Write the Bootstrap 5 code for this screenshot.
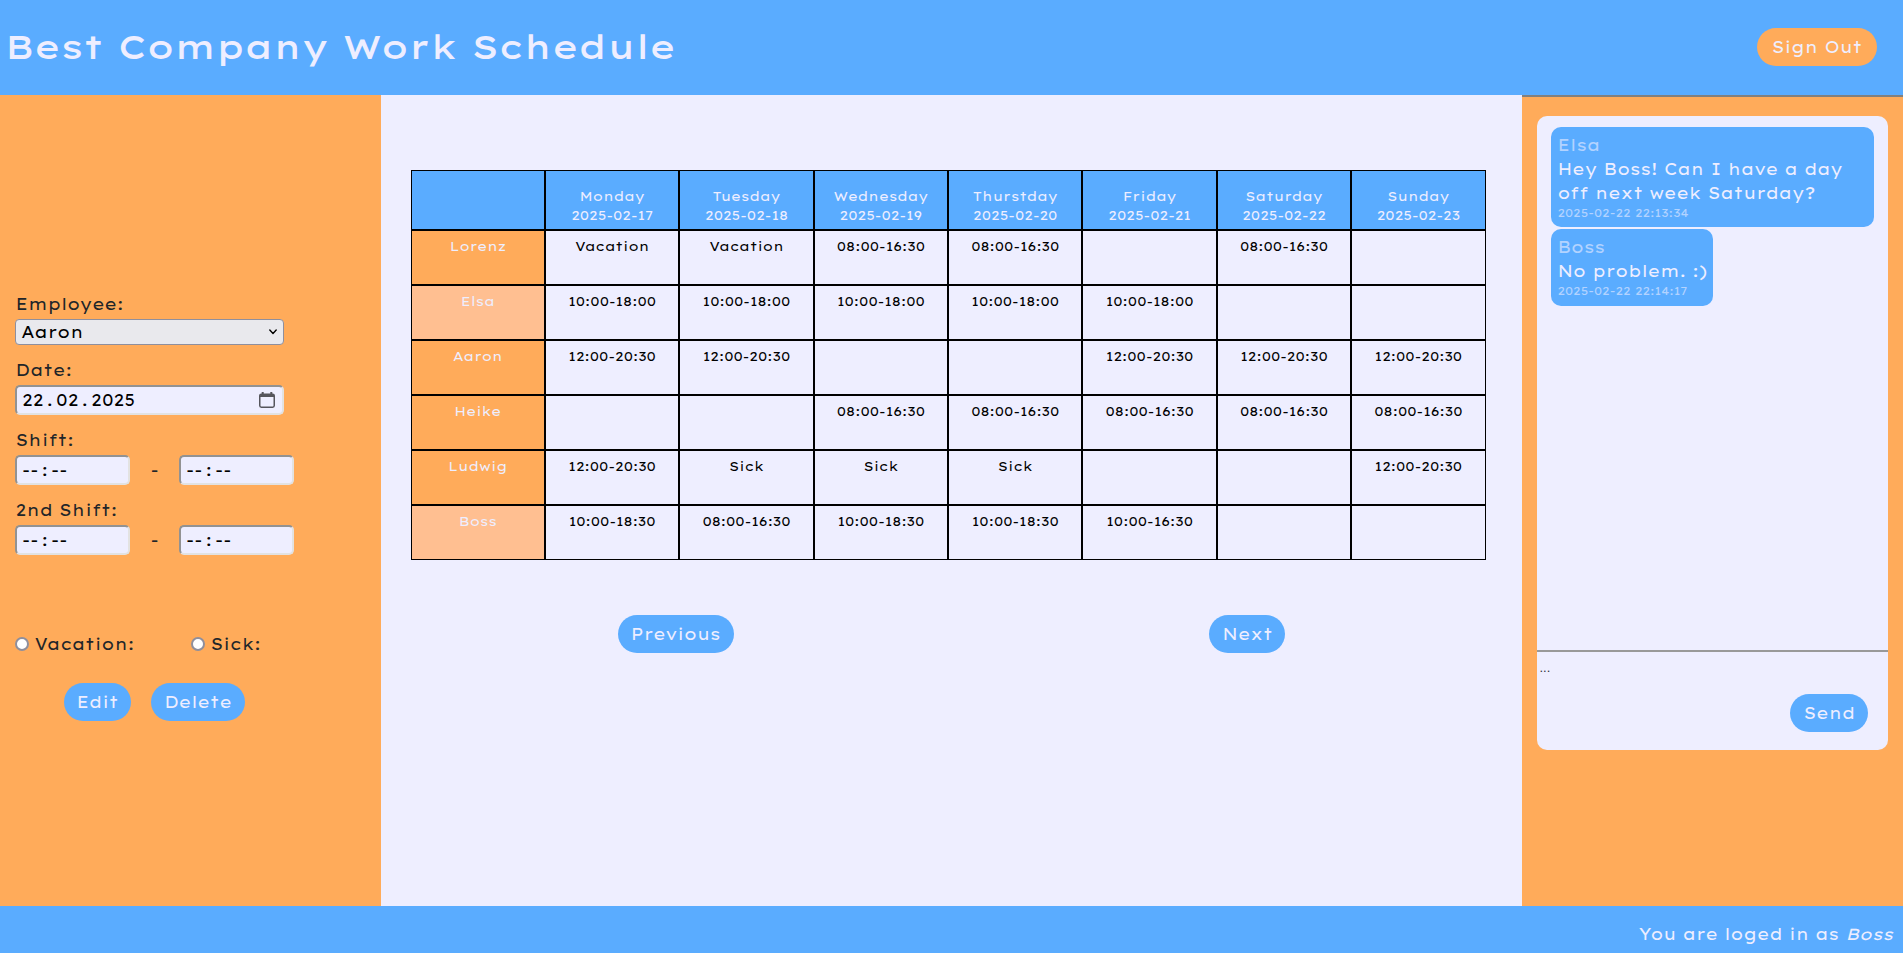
<!DOCTYPE html>
<html lang="en">
<head>
<meta charset="utf-8">
<meta name="viewport" content="width=device-width, initial-scale=1">
<title>Best Company Work Schedule</title>
<link rel="stylesheet" href="https://cdn.jsdelivr.net/npm/bootstrap@5.3.0/dist/css/bootstrap.min.css">
<style>
  :root { --sky: #5aacff; --sun: #ffab5a; --peach: #ffbf91; --paper: #eeeeff; }
  body { font-family: "Lexend Giga", Inter, sans-serif; font-size: 16px; background: var(--paper); height: 100vh; overflow: hidden; }
  .bg-sky { background: var(--sky); color: var(--paper); }
  .bg-sun { background: var(--sun); }
  .site-header { height: 95px; padding: 0 26px 1px 5px; }
  .site-title { font-size: 34px; font-weight: 500; line-height: 43px; margin: 0 0 1px; }
  .site-footer { height: 47px; padding: 16px 10px 0 0; }
  .side { width: 20%; }
  .pill { display: inline-block; height: 38px; padding: 7px 0; border: 0; border-radius: 20px; line-height: 24px; background: var(--sky); color: var(--paper); text-align: center; }
  .pill-sun { background: var(--sun); width: 120px; }

  .editor { padding: 197px 0 0 15px; }
  .editor .caption { display: block; line-height: 24px; padding-left: .6px; }
  .picker { display: block; appearance: none; width: 269px; height: 26px; margin: 3px 0 13px; padding: 0 0 0 5px; line-height: 24px; color: #000; border: 1px solid #8f8f9d; border-radius: 4px;
    background: #e9e9ed url("data:image/svg+xml,%3Csvg xmlns='http://www.w3.org/2000/svg' viewBox='0 0 8 6'%3E%3Cpath d='M.8 1 4 4.4 7.2 1' fill='none' stroke='%23000' stroke-width='1.4' stroke-linecap='round' stroke-linejoin='round'/%3E%3C/svg%3E") no-repeat right 6px center / 8px 6px; }
  .field { height: 30px; margin: 3px 0 13px; padding: 0 7px 0 5px; line-height: 26px; color: #000; background: var(--paper); border: 2px solid; border-color: #929292 #e2e2e2 #e2e2e2 #929292; border-radius: 5px; }
  .field-date { width: 269px; }
  .field-time { width: 115px; }
  .sep { width: 12.5px; text-align: center; }
  .dash { width: 49px; text-align: center; line-height: 36px; }
  .dot { appearance: none; flex: none; width: 14px; height: 14px; margin: 0 5.5px 0 0; background: #fff; border: 2px solid #8f8f9d; border-radius: 50%; }
  .kind { line-height: 24px; color: #212529; margin-top: 64px; }
  .actions { margin: 27px 0 0 49px; gap: 20px; }

  .board { width: 1075px; margin: 75px 0 0 30px; display: grid; grid-template-columns: repeat(8, 1fr); grid-template-rows: 60px repeat(6, 55px); font-size: 12.8px; line-height: 19.2px; color: #000; }
  .board > div { border: 1px solid #000; padding-top: 5.6px; text-align: center; }
  .board .day { background: var(--sky); color: var(--paper); padding-top: 15.6px; }
  .board .who { background: var(--sun); color: var(--paper); }
  .board .lead-row { background: var(--peach); }
  .pager { padding: 55px 237px 0; }

  .chat { border-top: 2px solid #808080; padding: 19px 15px 0; }
  .chat-box { width: 351px; height: 634px; border-radius: 10px; background: var(--paper); }
  .messages { height: 534px; padding: 11px 14px 0; gap: 2px; }
  .bubble { border-radius: 10px; padding: 6px 5px 5px 6px; line-height: 24px; width: max-content; max-width: 323px; }
  .bubble .from { opacity: .6; }
  .bubble .when { opacity: .6; font-size: 11.2px; line-height: 17.4px; }
  .compose { border-top: 2px solid #999; }
  .draft { display: block; height: 42px; padding: 8px 2px; font: 13px/16px "Liberation Sans", sans-serif; color: #33333a; }
</style>
</head>
<body class="d-flex flex-column">
  <header class="site-header bg-sky d-flex justify-content-between align-items-center flex-shrink-0">
    <h1 class="site-title">Best Company Work Schedule</h1>
    <button class="pill pill-sun" type="button">Sign Out</button>
  </header>

  <div class="d-flex flex-grow-1">
    <aside class="side editor bg-sun">
      <label class="caption" for="employee">Employee:</label>
      <select class="picker" id="employee"><option>Aaron</option></select>

      <span class="caption">Date:</span>
      <div class="field field-date d-flex align-items-center justify-content-between">
        <div class="d-flex"><span>22</span><span class="sep">.</span><span>02</span><span class="sep">.</span><span>2025</span></div>
        <svg width="16" height="16" viewBox="0 0 16 16" fill="none"><path d="M1.8 3.2Q1.8 2 3 2H13Q14.2 2 15.2 3V5H.8V3Z" fill="#55555c"/><path d="M3.7 0V3M12.3 0V3" stroke="#55555c" stroke-width="2"/><rect x=".75" y="2.2" width="14.5" height="13" rx="1.6" stroke="#55555c" stroke-width="1.5"/></svg>
      </div>

      <span class="caption">Shift:</span>
      <div class="d-flex">
        <div class="field field-time d-flex"><span>--</span><span class="sep">:</span><span>--</span></div>
        <span class="dash">-</span>
        <div class="field field-time d-flex"><span>--</span><span class="sep">:</span><span>--</span></div>
      </div>

      <span class="caption">2nd Shift:</span>
      <div class="d-flex">
        <div class="field field-time d-flex"><span>--</span><span class="sep">:</span><span>--</span></div>
        <span class="dash">-</span>
        <div class="field field-time d-flex"><span>--</span><span class="sep">:</span><span>--</span></div>
      </div>

      <div class="d-flex kind">
        <label class="d-flex align-items-center" style="width:176px"><input class="dot" type="radio" name="kind">Vacation:</label>
        <label class="d-flex align-items-center"><input class="dot" type="radio" name="kind">Sick:</label>
      </div>
      <div class="d-flex actions">
        <button class="pill" style="width:67px" type="button">Edit</button>
        <button class="pill" style="width:94px" type="button">Delete</button>
      </div>
    </aside>

    <main class="flex-grow-1">
      <div class="board" id="board"></div>
      <div class="pager d-flex justify-content-between">
        <button class="pill" style="width:116px" type="button">Previous</button>
        <button class="pill" style="width:76px" type="button">Next</button>
      </div>
    </main>

    <aside class="side chat bg-sun">
      <div class="chat-box">
        <div class="messages d-flex flex-column">
          <div class="bubble bg-sky"><div class="from">Elsa</div><div>Hey Boss! Can I have a day off next week Saturday?</div><div class="when">2025-02-22 22:13:34</div></div>
          <div class="bubble bg-sky"><div class="from">Boss</div><div>No problem. :)</div><div class="when">2025-02-22 22:14:17</div></div>
        </div>
        <div class="compose">
          <span class="draft">...</span>
          <div class="text-end" style="padding-right:20px"><button class="pill" style="width:78px" type="button">Send</button></div>
        </div>
      </div>
    </aside>
  </div>

  <footer class="site-footer bg-sky text-end flex-shrink-0">You are loged in as <em>Boss</em></footer>

<script src="https://cdn.jsdelivr.net/npm/bootstrap@5.3.0/dist/js/bootstrap.bundle.min.js"></script>
<script>
  const days = [["Monday", 17], ["Tuesday", 18], ["Wednesday", 19], ["Thurstday", 20], ["Friday", 21], ["Saturday", 22], ["Sunday", 23]];
  const early = "08:00-16:30", mid = "10:00-18:00", late = "12:00-20:30", boss = "10:00-18:30";
  const staff = [
    ["Lorenz", false, ["Vacation", "Vacation", early, early, "", early, ""]],
    ["Elsa", true, [mid, mid, mid, mid, mid, "", ""]],
    ["Aaron", false, [late, late, "", "", late, late, late]],
    ["Heike", false, ["", "", early, early, early, early, early]],
    ["Ludwig", false, [late, "Sick", "Sick", "Sick", "", "", late]],
    ["Boss", true, [boss, early, boss, boss, "10:00-16:30", "", ""]]
  ];
  let html = '<div class="day"></div>';
  for (const [name, date] of days) html += `<div class="day">${name}<br>2025-02-${date}</div>`;
  for (const [name, lead, shifts] of staff) {
    html += `<div class="who${lead ? " lead-row" : ""}">${name}</div>`;
    for (const s of shifts) html += `<div>${s}</div>`;
  }
  document.getElementById("board").innerHTML = html;
</script>
</body>
</html>
